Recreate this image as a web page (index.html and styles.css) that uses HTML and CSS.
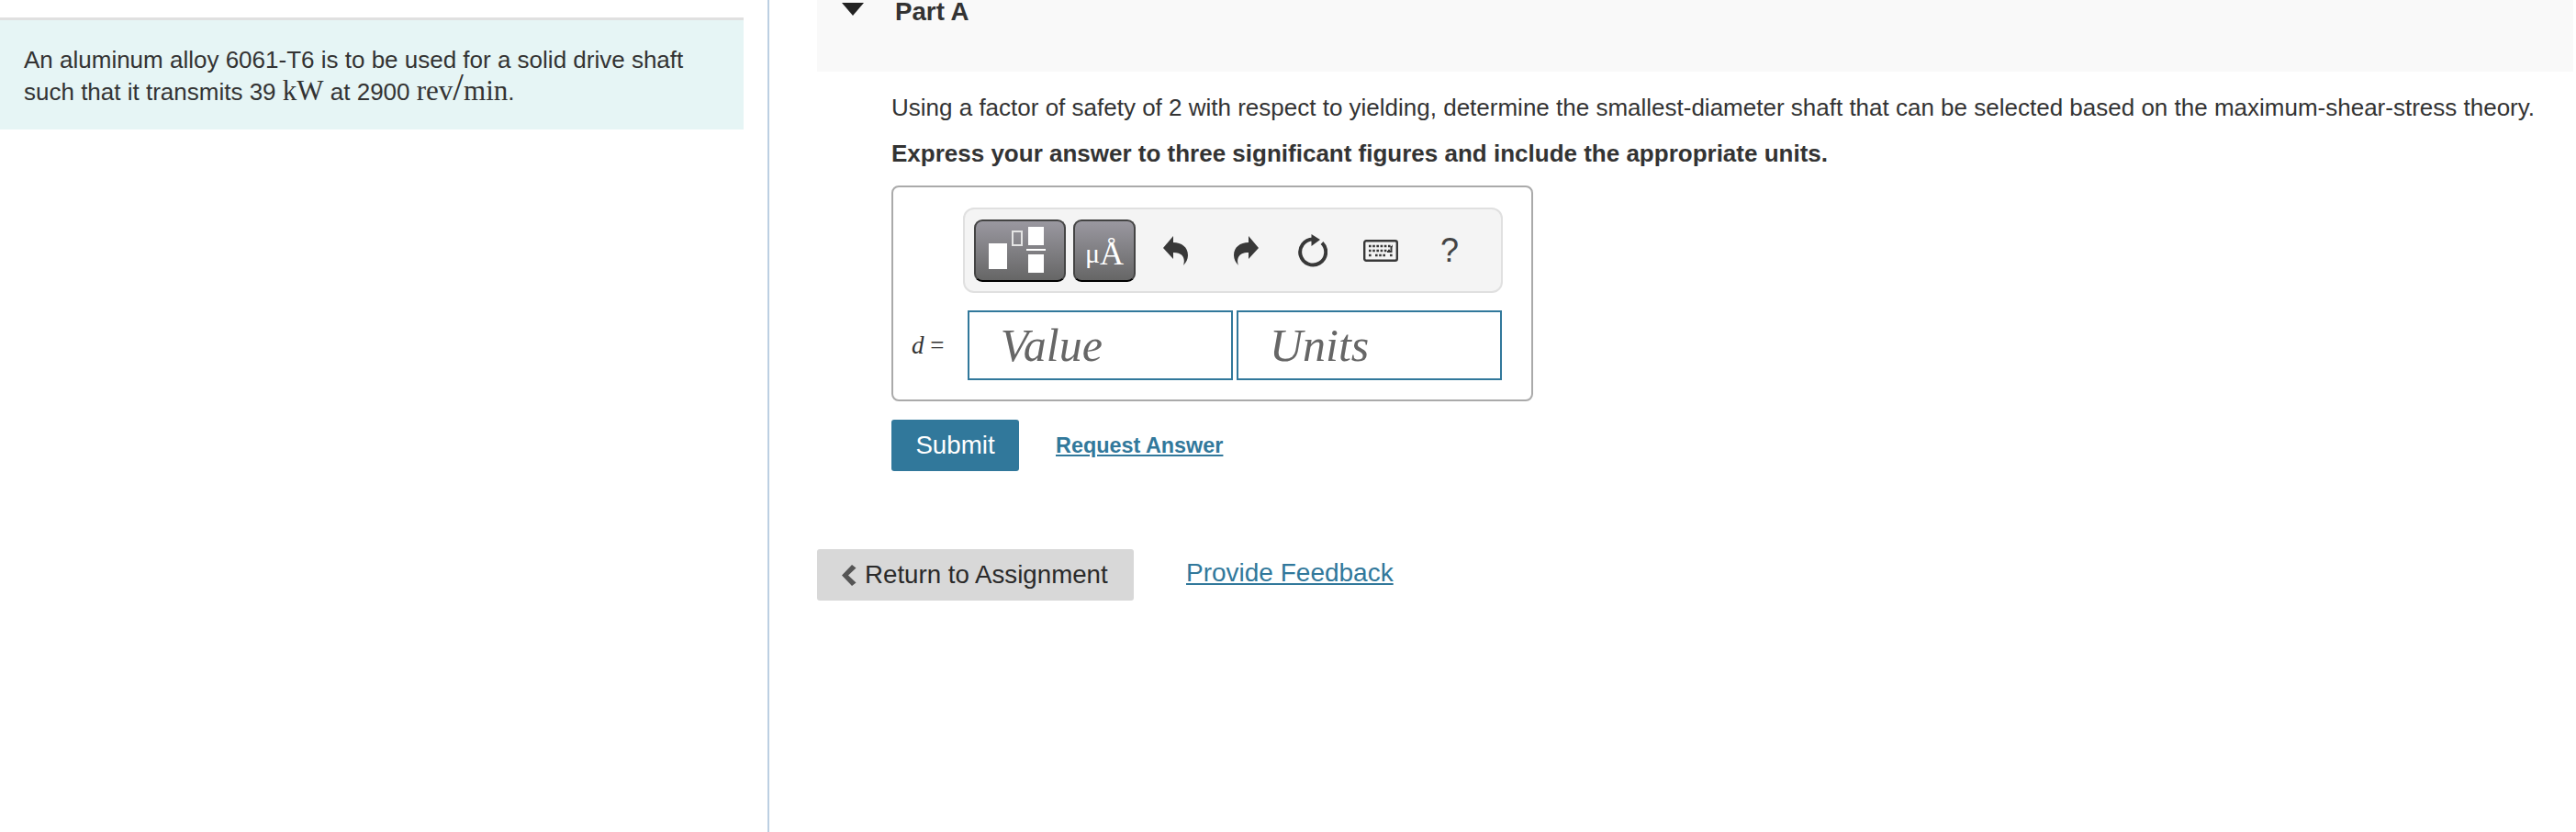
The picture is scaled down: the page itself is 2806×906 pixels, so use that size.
FILE: index.html
```html
<!DOCTYPE html>
<html lang="en">
<head>
  <meta charset="UTF-8">
  <title>Part A</title>
  <link rel="stylesheet" href="styles.css">
</head>
<body>
<div class="page">
  <div class="sidebar">
    <div class="intro">
      An aluminum alloy 6061-T6 is to be used for a solid drive shaft
      such that it transmits 39 <span class="math">kW</span> at 2900 <span class="math">rev<span class="slash">/</span>min</span>.
    </div>
  </div>
  <div class="content">
    <div class="partHeader">
      <svg class="caret" width="24" height="14" viewBox="0 0 24 14"><path d="M0 0H24L12 14Z"/></svg>
      <span class="partTitle">Part A</span>
    </div>
    <div class="question">
      <p class="prompt">Using a factor of safety of 2 with respect to yielding, determine the smallest-diameter shaft that can be selected based on the maximum-shear-stress theory.</p>
      <p class="instruction">Express your answer to three significant figures and include the appropriate units.</p>

      <div class="answerBox">
        <div class="toolbar">
          <div class="toolBtn templates">
            <svg width="100" height="68" viewBox="0 0 100 68">
              <rect x="16" y="26" width="20" height="28" fill="#fff"/>
              <rect x="42" y="13" width="10" height="15" fill="none" stroke="#e4e4e4" stroke-width="2"/>
              <rect x="59" y="8" width="17" height="20" fill="#fff"/>
              <rect x="57" y="32" width="21" height="2" fill="#fff"/>
              <rect x="59" y="38" width="17" height="20" fill="#fff"/>
            </svg>
          </div>
          <div class="toolBtn symbols"><span class="mu">μ</span><span class="angstrom">Å</span></div>
          <svg class="tool undo" width="27" height="32" viewBox="0 0 27 32"><path d="M0 13L11 0V7C20 7 27 12 27 21C27 25 25 29 22 32C24 26 23 18 11 18V25Z"/></svg>
          <svg class="tool redo" width="27" height="32" viewBox="0 0 27 32"><path d="M27 13L16 0V7C7 7 0 12 0 21C0 25 2 29 5 32C3 26 4 18 16 18V25Z"/></svg>
          <svg class="tool reset" width="32" height="36" viewBox="0 0 32 36">
            <path d="M16 5.500A14 14 0 1 0 26 9.500" fill="none" stroke="#383838" stroke-width="4"/>
            <path d="M14.500 0L24 6L14.500 13Z"/>
          </svg>
          <svg class="tool keyboard" width="38" height="24" viewBox="0 0 38 24">
            <rect x="1.200" y="1.200" width="35.600" height="21.600" rx="2" fill="none" stroke="#383838" stroke-width="2.400"/>
            <path d="M6 7H32M6 12H29M6 17H9M13 17H25M29 17H32" stroke="#383838" stroke-width="2.500" stroke-dasharray="2.600 1.600" fill="none"/>
            <path d="M30.500 7V13H26" stroke="#383838" stroke-width="2" fill="none"/>
          </svg>
          <span class="help">?</span>
        </div>
        <div class="inputRow">
          <span class="varLabel"><i>d</i> =</span>
          <div class="field">Value</div>
          <div class="field">Units</div>
        </div>
      </div>

      <div class="actions">
        <a class="submitBtn">Submit</a>
        <a class="requestLink">Request Answer</a>
      </div>
    </div>

    <div class="footerRow">
      <a class="returnBtn">
        <svg width="17" height="23" viewBox="0 0 17 23"><path d="M12 0L16.500 3.500L8 11.500L16.500 19.500L12 23L1 11.500Z"/></svg>
        Return to Assignment
      </a>
      <a class="feedbackLink">Provide Feedback</a>
    </div>
  </div>
</div>
</body>
</html>
```

FILE: styles.css
```css
* {
	box-sizing: border-box;
}
body {
	margin: 0;
	font-family: "Liberation Sans", Arial, sans-serif;
	font-size: 26px;
	color: #333;
	background-color: #fff;
}
.page {
	display: flex;
	height: 906px;
	overflow: hidden;
}

/* left column */
.sidebar {
	width: 838px;
	flex-shrink: 0;
	padding-top: 19px;
	border-right: 2px solid #bccfe2;
}
.intro {
	width: 810px;
	height: 122px;
	padding: 26px 26px 0 26px;
	line-height: 34px;
	background-color: #e6f5f5;
	border-top: 3px solid #e0e0e0;
}
.math {
	font-family: "Liberation Serif", serif;
	font-size: 31px;
}
.slash {
	font-size: 42px;
	font-weight: 100;
	line-height: 20px;
}

/* right column */
.content {
	flex: 1;
	padding: 0 3px 0 52px;
}
.partHeader {
	display: flex;
	height: 78px;
	background-color: #f9f9f9;
	padding-left: 27px;
	gap: 34px;
}
.caret {
	margin-top: 3px;
	fill: #222;
}
.partTitle {
	font-size: 27.700px;
	font-weight: bold;
	line-height: 26px;
}
.question {
	padding-left: 81px;
}
.prompt {
	margin: 23px 0 0 0;
	line-height: 32px;
}
.instruction {
	margin: 18px 0 0 0;
	line-height: 32px;
	font-weight: bold;
}

.answerBox {
	width: 699px;
	height: 235px;
	margin-top: 19px;
	padding: 22px 32px 0 76px;
	border: 2px solid #aaa;
	border-radius: 8px;
}
.toolbar {
	display: flex;
	align-items: center;
	width: 588px;
	height: 93px;
	padding-left: 10px;
	background-color: #f4f4f4;
	border: 2px solid #e0e0e0;
	border-radius: 12px;
}
.toolBtn {
	height: 68px;
	background: linear-gradient(#9a98a0, #666);
	border: 2px solid #444;
	border-bottom-color: #000;
	border-radius: 9px;
}
.templates {
	width: 100px;
}
.templates svg {
	display: block;
	margin: -2px;
}
.symbols {
	width: 68px;
	margin-left: 8px;
	display: flex;
	align-items: flex-end;
	justify-content: center;
	padding-bottom: 14px;
	font-family: "Liberation Serif", serif;
	color: #fff;
	line-height: 30px;
}
.mu {
	font-size: 30px;
}
.angstrom {
	font-size: 36px;
}
.tool {
	flex-shrink: 0;
	fill: #383838;
}
.undo {
	margin-left: 30px;
}
.redo {
	margin-left: 50px;
}
.reset {
	margin-left: 43px;
}
.keyboard {
	margin-left: 39px;
}
.help {
	margin-left: 46px;
	font-size: 36px;
	color: #444;
}

.inputRow {
	display: flex;
	align-items: center;
	margin-top: 19px;
	margin-left: -56px;
	gap: 4px;
}
.varLabel {
	width: 57px;
	font-family: "Liberation Serif", serif;
	font-size: 27px;
	white-space: nowrap;
}
.field {
	width: 290px;
	height: 76px;
	padding-left: 34px;
	border: 2px solid #31789b;
	font-family: "Liberation Serif", serif;
	font-style: italic;
	font-size: 50px;
	line-height: 72px;
	color: #666;
}

.actions {
	display: flex;
	align-items: center;
	margin-top: 20px;
	gap: 40px;
}
.submitBtn {
	width: 139px;
	height: 56px;
	font-size: 27.700px;
	line-height: 56px;
	text-align: center;
	color: #fff;
	background-color: #31789b;
	border-radius: 3px;
}
.requestLink {
	font-size: 23.400px;
	font-weight: bold;
	color: #31789b;
	text-decoration: underline;
}

.footerRow {
	display: flex;
	align-items: center;
	margin-top: 85px;
	gap: 57px;
}
.returnBtn {
	display: flex;
	align-items: center;
	gap: 9px;
	width: 345px;
	height: 56px;
	padding-left: 26px;
	font-size: 27.700px;
	background-color: #d8d8d8;
	border-radius: 3px;
	color: #2a2a2a;
}
.returnBtn svg {
	fill: #555;
}
.feedbackLink {
	margin-top: -4px;
	font-size: 28px;
	color: #31789b;
	text-decoration: underline;
}
```
